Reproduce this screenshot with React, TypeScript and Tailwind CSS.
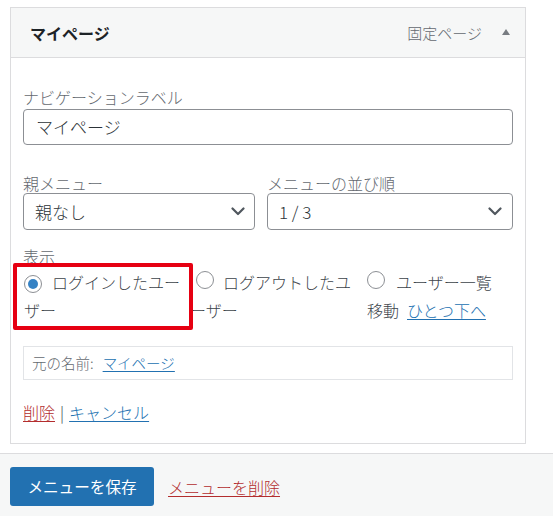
import React from "react";

const font = { fontFamily: '"Noto Sans CJK JP", "Noto Sans", sans-serif' };

function Chevron() {
  return (
    <svg width="14" height="9" viewBox="0 0 14 9" className="shrink-0">
      <path d="M1.5 1.5 L7 7 L12.5 1.5" fill="none" stroke="#50575e" strokeWidth="2.2" strokeLinecap="round" strokeLinejoin="round" />
    </svg>
  );
}

function Radio({ checked }: { checked?: boolean }) {
  return (
    <span className="inline-flex h-[18px] w-[18px] shrink-0 items-center justify-center rounded-full border border-[#8c8f94] bg-white">
      {checked && <span className="h-[10px] w-[10px] rounded-full bg-[#3582c4]" />}
    </span>
  );
}

export default function App() {
  return (
    <div className="relative h-[516px] w-[553px] overflow-hidden bg-white font-light" style={font}>
      <div className="pt-[7px] pl-[10px]">
        <div className="w-[516px] border border-[#dcdcde] bg-white">
          <div className="flex h-[50px] items-center justify-between border-b border-[#dcdcde] bg-[#f6f7f7] pl-[19px] pr-[15px]">
            <span className="text-[16px] font-bold leading-5 text-[#1d2327]">マイページ</span>
            <div className="flex items-center">
              <span className="text-[15px] leading-5 text-[#646970]">固定ページ</span>
              <svg width="8" height="6" viewBox="0 0 8 6" className="ml-[20px] mt-[-2px]">
                <path d="M0 6 L4 0 L8 6 Z" fill="#787c82" />
              </svg>
            </div>
          </div>
          <div className="px-[12px] pt-[29px] pb-[21px]">
            <div className="text-[16px] leading-5 text-[#646970]">ナビゲーションラベル</div>
            <div className="mt-[2px] flex h-[36px] items-center rounded-[4px] border border-[#8c8f94] pl-[12px] text-[17px] text-[#2c3338]">
              マイページ
            </div>
            <div className="mt-[28px] flex gap-[12px]">
              <div className="w-[232px]">
                <div className="text-[16px] leading-5 text-[#646970]">親メニュー</div>
                <div className="flex h-[37px] items-center justify-between rounded-[4px] border border-[#8c8f94] pl-[11px] pr-[9px] text-[17px] text-[#2c3338]">
                  <span>親なし</span>
                  <Chevron />
                </div>
              </div>
              <div className="w-[246px]">
                <div className="text-[16px] leading-5 text-[#646970]">メニューの並び順</div>
                <div className="flex h-[37px] items-center justify-between rounded-[4px] border border-[#8c8f94] pl-[11px] pr-[10px] text-[17px] text-[#2c3338]">
                  <span>1 / 3</span>
                  <Chevron />
                </div>
              </div>
            </div>
            <div className="mt-[16px] text-[16px] leading-5 text-[#646970]">表示</div>
            <div className="mt-[2px] flex text-[16px] text-[#3c434a]">
              <div className="w-[167px]">
                <div className="flex h-[28px] items-center">
                  <span className="ml-[1px]"><Radio checked /></span>
                  <span className="ml-[10px] whitespace-nowrap">ログインしたユー</span>
                </div>
                <div className="flex h-[28px] items-center pl-[1px]">ザー</div>
              </div>
              <div className="w-[176px]">
                <div className="flex h-[28px] items-center">
                  <span className="ml-[6px]"><Radio /></span>
                  <span className="ml-[9px] whitespace-nowrap">ログアウトしたユ</span>
                </div>
                <div className="flex h-[28px] items-center">ーザー</div>
              </div>
              <div className="flex-1">
                <div className="flex h-[28px] items-center">
                  <span className="ml-[1px]"><Radio /></span>
                  <span className="ml-[11px] whitespace-nowrap">ユーザー一覧</span>
                </div>
                <div className="flex h-[28px] items-center pl-[1px]">
                  <span>移動</span>
                  <a className="ml-[8px] text-[#2271b1] underline underline-offset-2">ひとつ下へ</a>
                </div>
              </div>
            </div>
            <div className="mt-[22px] flex h-[34px] items-center border border-[#e2e4e7] pl-[8px] text-[14.5px] text-[#646970]">
              <span>元の名前:</span>
              <a className="ml-[9px] text-[#2271b1] underline underline-offset-2">マイページ</a>
            </div>
            <div className="mt-[22px] flex h-5 items-center text-[16px]">
              <a className="text-[#b32d2e] underline underline-offset-2">削除</a>
              <span className="mx-[5px] text-[#3c434a]">|</span>
              <a className="text-[#2271b1] underline underline-offset-2">キャンセル</a>
            </div>
          </div>
        </div>
      </div>
      <div className="mt-[9px] h-[200px] border-t border-[#dcdcde] bg-[#f6f7f7] pl-[10px] pt-[13px]">
        <div className="flex items-center">
          <div className="flex h-[39px] w-[144px] items-center justify-center rounded-[3px] bg-[#2271b1] text-[15.6px] font-normal text-white">
            メニューを保存
          </div>
          <a className="ml-[14px] text-[16px] text-[#b32d2e] underline underline-offset-2">メニューを削除</a>
        </div>
      </div>
      <div className="pointer-events-none absolute left-[13px] top-[263px] h-[67px] w-[180px] rounded-[2px] border-[4px] border-[#e60012]" />
    </div>
  );
}
